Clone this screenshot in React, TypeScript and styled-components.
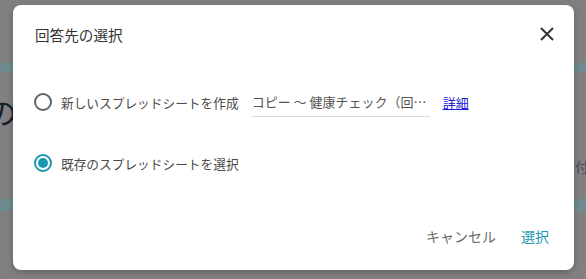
import styled, { createGlobalStyle } from 'styled-components'

const GlobalStyle = createGlobalStyle`
  html, body {
    margin: 0;
    padding: 0;
    background: #808080;
    font-family: "Noto Sans CJK JP", "Noto Sans", sans-serif;
  }
`

const Page = styled.div`
  position: relative;
  width: 586px;
  height: 279px;
  overflow: hidden;
  background: #808080;
`

const Backdrop = styled.div`
  display: flex;
  flex-direction: column;
  height: 100%;
`

const Band = styled.div<{ $h: number; $top: number }>`
  height: ${p => p.$h}px;
  margin-top: ${p => p.$top}px;
  background: #6e8b8f;
`

const BackRow = styled.div<{ $align: string; $top: number }>`
  display: flex;
  justify-content: ${p => p.$align};
  margin-top: ${p => p.$top}px;
  line-height: 1;
`

const BigGlyph = styled.span`
  font-size: 30px;
  color: #15202c;
  margin-left: -13px;
`

const SmallGlyph = styled.span`
  font-size: 14px;
  color: #4a4660;
  margin-right: -3px;
`

const Overlay = styled.div`
  position: absolute;
  inset: 0;
  padding: 5px 12px 9px 13px;
  display: flex;
`

const Dialog = styled.div`
  flex: 1;
  background: #fff;
  border-radius: 8px;
  box-shadow: 0 2px 6px rgba(0, 0, 0, 0.25);
  display: flex;
  flex-direction: column;
`

const Header = styled.div`
  height: 58px;
  display: flex;
  align-items: center;
  justify-content: space-between;
  padding: 0 19px 0 22px;
`

const Title = styled.h2`
  margin: 0;
  font-size: 14.6px;
  font-weight: 400;
  color: #333;
`

const CloseButton = styled.button`
  border: none;
  background: none;
  padding: 0;
  width: 16px;
  height: 16px;
  display: flex;
  align-items: center;
  justify-content: center;
  cursor: pointer;
`

const Body = styled.div`
  padding: 19px 21px 0 21px;
  display: flex;
  flex-direction: column;
  gap: 21px;
`

const Option = styled.label`
  height: 40px;
  display: flex;
  align-items: center;
  font-size: 12.7px;
  color: #4a4a4a;
`

const Radio = styled.span<{ $checked?: boolean }>`
  box-sizing: border-box;
  width: 18px;
  height: 18px;
  border-radius: 50%;
  border: 2px solid ${p => (p.$checked ? '#1a97b0' : '#5f6368')};
  display: flex;
  align-items: center;
  justify-content: center;
  margin-right: 9px;
  flex-shrink: 0;

  &::after {
    content: '';
    width: 10px;
    height: 10px;
    border-radius: 50%;
    background: #1a97b0;
    display: ${p => (p.$checked ? 'block' : 'none')};
  }
`

const NameInput = styled.input`
  margin-left: 13px;
  width: 178px;
  box-sizing: border-box;
  border: none;
  border-bottom: 1px solid #dadada;
  padding: 4px 0 5px;
  font-family: inherit;
  font-size: 13px;
  color: #555;
  text-overflow: ellipsis;
  outline: none;
  background: transparent;
`

const DetailLink = styled.a`
  margin-left: 13px;
  font-size: 13px;
  color: #2020d8;
  text-decoration: underline;
`

const Footer = styled.div`
  margin-top: 37px;
  display: flex;
  justify-content: flex-end;
  gap: 9px;
  padding-right: 17px;
`

const TextButton = styled.button<{ $primary?: boolean }>`
  border: none;
  background: none;
  height: 32px;
  padding: 0 8px;
  font-family: inherit;
  font-size: 14px;
  color: ${p => (p.$primary ? '#1a97b0' : '#6b6b6b')};
  cursor: pointer;
`

function App() {
  return (
    <>
      <GlobalStyle />
      <Page>
        <Backdrop>
          <Band $h={9} $top={63} />
          <BackRow $align="flex-start" $top={24}>
            <BigGlyph>の</BigGlyph>
          </BackRow>
          <BackRow $align="flex-end" $top={33}>
            <SmallGlyph>付</SmallGlyph>
          </BackRow>
          <Band $h={12} $top={26} />
        </Backdrop>
        <Overlay>
          <Dialog>
            <Header>
              <Title>回答先の選択</Title>
              <CloseButton aria-label="閉じる">
                <svg width="14" height="14" viewBox="0 0 14 14">
                  <path d="M1 1 L13 13 M13 1 L1 13" stroke="#333" strokeWidth="2" />
                </svg>
              </CloseButton>
            </Header>
            <Body>
              <Option>
                <Radio />
                新しいスプレッドシートを作成
                <NameInput defaultValue="コピー ～ 健康チェック（回答）" />
                <DetailLink href="#">詳細</DetailLink>
              </Option>
              <Option>
                <Radio $checked />
                既存のスプレッドシートを選択
              </Option>
            </Body>
            <Footer>
              <TextButton>キャンセル</TextButton>
              <TextButton $primary>選択</TextButton>
            </Footer>
          </Dialog>
        </Overlay>
      </Page>
    </>
  )
}

export default App
